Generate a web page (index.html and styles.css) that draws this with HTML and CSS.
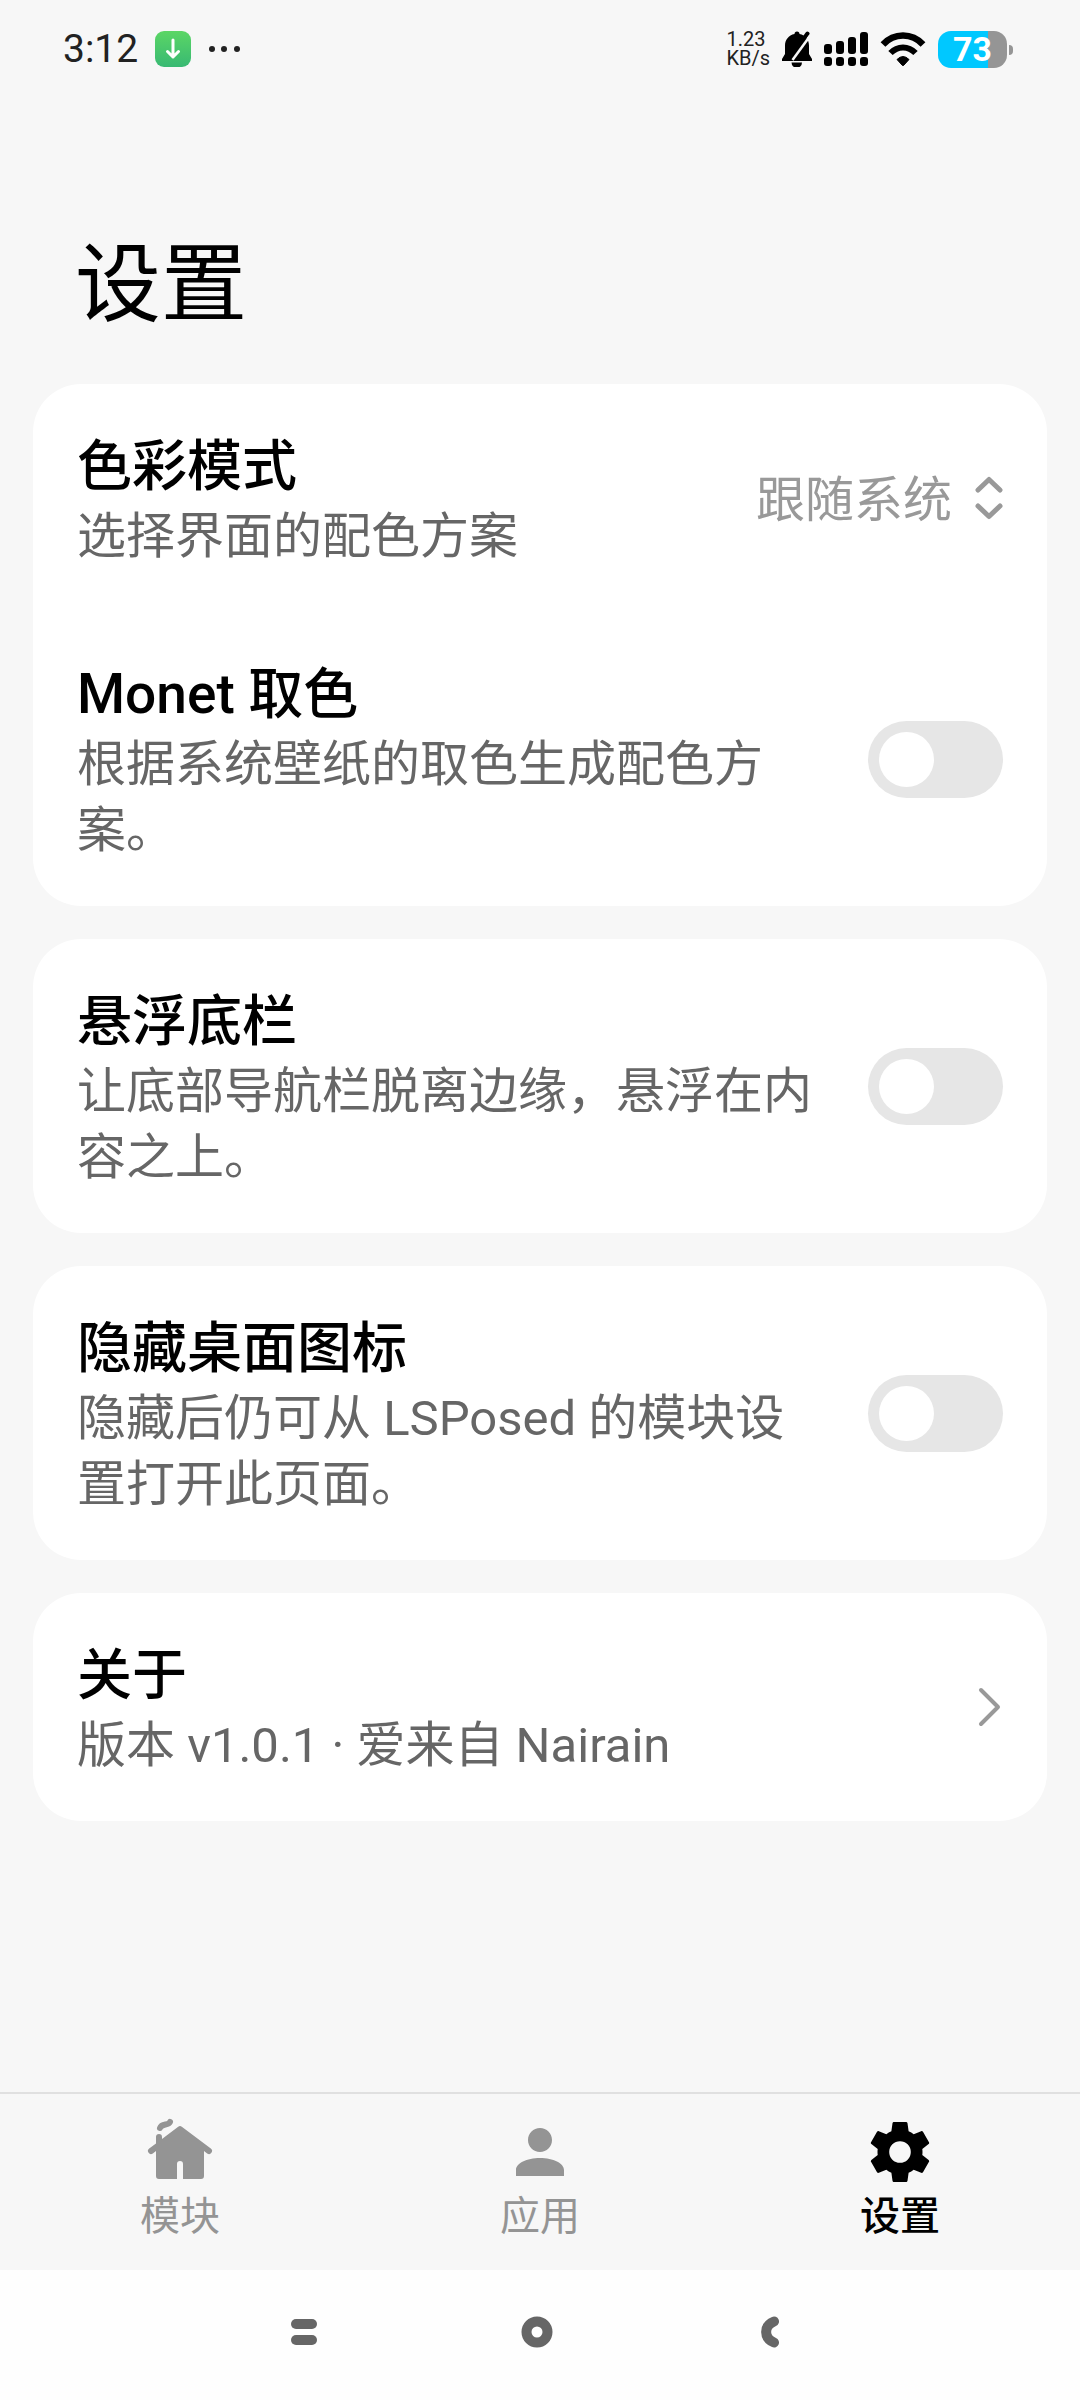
FILE: index.html
```html
<!DOCTYPE html>
<html lang="zh-CN">
<head>
    <meta charset="UTF-8">
    <meta name="viewport" content="width=device-width, initial-scale=1.0">
    <title>设置</title>
    <link rel="stylesheet" href="styles.css">
</head>
<body>

    <header class="status-bar">
        <div class="status-left">
            <span class="clock">3:12</span>
            <svg class="download" width="36" height="36" viewBox="0 0 36 36">
                <defs>
                    <linearGradient id="green" x1="0" y1="0" x2="0" y2="1">
                        <stop offset="0" stop-color="#5bd665"/>
                        <stop offset="1" stop-color="#38b973"/>
                    </linearGradient>
                </defs>
                <rect width="36" height="36" rx="9" fill="url(#green)"/>
                <path d="M18 9v17M12.500 20.500l5.500 5.500 5.500-5.500" fill="none" stroke="#fff" stroke-width="3" stroke-linecap="round" stroke-linejoin="round"/>
            </svg>
            <svg width="32" height="36" viewBox="0 0 32 36" fill="#222">
                <circle cx="4" cy="18" r="3"/>
                <circle cx="16" cy="18" r="3"/>
                <circle cx="29" cy="18" r="3"/>
            </svg>
        </div>
        <div class="status-right">
            <div class="speed">
                <span>1.23</span>
                <span>KB/s</span>
            </div>
            <svg width="30" height="36" viewBox="0 0 30 36">
                <path d="M12.500 3a2.500 2.500 0 0 1 5 0c6 1.200 9.500 6 9.500 11.500V23l3 5v2H0v-2l3-5v-8.500C3 9 6.500 4.200 12.500 3z"/>
                <path d="M9.500 31.500h10.500a5 5 0 0 1-10.500 0z"/>
                <path d="M20 10l5.500-7.500" stroke="#000" stroke-width="4" stroke-linecap="round"/>
                <path d="M10.500 29L28 5" stroke="#f7f7f7" stroke-width="2.500"/>
            </svg>
            <svg width="44" height="36" viewBox="0 0 44 36">
                <rect x="0" y="13" width="8" height="10" rx="3"/>
                <rect x="12" y="10" width="8" height="13" rx="3"/>
                <rect x="24" y="6" width="8" height="17" rx="3"/>
                <rect x="36" y="1" width="8" height="22" rx="3"/>
                <rect x="0" y="26" width="8" height="9" rx="3"/>
                <rect x="12" y="26" width="8" height="9" rx="3"/>
                <rect x="24" y="26" width="8" height="9" rx="3"/>
                <rect x="36" y="26" width="8" height="9" rx="3"/>
            </svg>
            <svg width="46" height="36" viewBox="0 0 46 36">
                <path d="M3 13.500C14 1.500 32 1.500 43 13.500" fill="none" stroke="#000" stroke-width="6.500"/>
                <path d="M10.500 22C17.500 14.500 28.500 14.500 35.500 22" fill="none" stroke="#000" stroke-width="6"/>
                <path d="M17 28.500q6-6 12 0l-5 5.500q-1 1.200-2 0z" stroke="#000" stroke-linejoin="round"/>
            </svg>
            <span class="battery">73</span>
        </div>
    </header>

    <main>
        <h1>设置</h1>

        <section class="card">
            <div class="row">
                <div class="text">
                    <label class="title" for="colorMode">色彩模式</label>
                    <p>选择界面的配色方案</p>
                </div>
                <div class="dropdown">
                    <select id="colorMode">
                        <option>跟随系统</option>
                        <option>浅色模式</option>
                        <option>深色模式</option>
                    </select>
                    <svg width="28" height="44" viewBox="0 0 28 44">
                        <path d="M3 14L14 3.500 25 14M3 30l11 10.500L25 30"/>
                    </svg>
                </div>
            </div>
            <div class="row">
                <div class="text">
                    <label class="title" for="monet">Monet 取色</label>
                    <p>根据系统壁纸的取色生成配色方案。</p>
                </div>
                <input type="checkbox" class="switch" id="monet">
            </div>
        </section>

        <section class="card">
            <div class="row">
                <div class="text">
                    <label class="title" for="floatingBar">悬浮底栏</label>
                    <p>让底部导航栏脱离边缘，悬浮在内容之上。</p>
                </div>
                <input type="checkbox" class="switch" id="floatingBar">
            </div>
        </section>

        <section class="card">
            <div class="row">
                <div class="text">
                    <label class="title" for="hideIcon">隐藏桌面图标</label>
                    <p>隐藏后仍可从 LSPosed 的模块设置打开此页面。</p>
                </div>
                <input type="checkbox" class="switch" id="hideIcon">
            </div>
        </section>

        <section class="card">
            <a class="row" href="#about">
                <div class="text">
                    <span class="title">关于</span>
                    <p>版本 v1.0.1 · 爱来自 Nairain</p>
                </div>
                <svg class="chevron" width="28" height="40" viewBox="0 0 28 40">
                    <path d="M6 3l17 17L6 37"/>
                </svg>
            </a>
        </section>
    </main>

    <nav class="tab-bar">
        <a href="#modules">
            <svg width="72" height="72" viewBox="0 0 72 72">
                <path d="M16 12C18 7 24 10 26 6" fill="none" stroke="currentColor" stroke-width="6" stroke-linecap="round"/>
                <path d="M12 21a3 3 0 0 1 6 0v2L34.200 10.700a3 3 0 0 1 3.600 0L66.800 32.600a3 3 0 0 1-3.600 4.800L60 35v25a3 3 0 0 1-3 3H39V48a3 3 0 0 0-6 0v15H15a3 3 0 0 1-3-3V35l-3.200 2.400a3 3 0 0 1-3.600-4.800L12 27.500z"/>
            </svg>
            模块
        </a>
        <a href="#apps">
            <svg width="72" height="72" viewBox="0 0 24 24">
                <path d="M12 12c2.210 0 4-1.790 4-4s-1.790-4-4-4-4 1.790-4 4 1.790 4 4 4zm0 2c-4.420 0-8 1.790-8 4v2h16v-2c0-2.210-3.580-4-8-4z"/>
            </svg>
            应用
        </a>
        <a class="active" href="#settings">
            <svg width="72" height="72" viewBox="0 0 24 24">
                <path d="M19.500 12c0-.34-.03-.66-.07-1l2.110-1.630c.19-.15.24-.42.12-.64l-2-3.460c-.12-.22-.39-.31-.61-.22l-2.490 1c-.52-.39-1.060-.73-1.690-.98l-.37-2.650A.506.506 0 0 0 14 2h-4c-.25 0-.46.18-.5.42l-.37 2.650c-.63.25-1.170.59-1.690.98l-2.490-1c-.22-.09-.49 0-.61.22l-2 3.460c-.13.220-.07.490.12.640L4.570 11c-.04.340-.07.670-.07 1 0 .330.03.650.07.970l-2.110 1.660c-.19.150-.25.420-.12.640l2 3.460c.12.220.390.300.610.220l2.490-1.010c.52.400 1.060.740 1.690.990l.37 2.650c.040.240.250.420.500.420h4c.250 0 .460-.180.500-.420l.370-2.650c.630-.260 1.170-.590 1.690-.990l2.490 1.010c.220.080.490 0 .610-.220l2-3.460c.120-.220.070-.490-.120-.640l-2.110-1.660c.040-.320.070-.640.070-.970zM12 15.600a3.600 3.600 0 1 1 0-7.200 3.600 3.600 0 0 1 0 7.200z"/>
            </svg>
            设置
        </a>
    </nav>

    <footer class="system-nav">
        <button type="button" aria-label="最近任务">
            <svg width="32" height="32" viewBox="0 0 32 32">
                <rect x="3" y="3" width="26" height="10" rx="5"/>
                <rect x="3" y="19" width="26" height="10" rx="5"/>
            </svg>
        </button>
        <button type="button" aria-label="主屏幕">
            <svg width="32" height="32" viewBox="0 0 32 32">
                <circle cx="16" cy="16" r="10.500" fill="none" stroke="#666" stroke-width="10"/>
            </svg>
        </button>
        <button type="button" aria-label="返回">
            <svg width="32" height="32" viewBox="0 0 32 32">
                <path d="M20 5.500C9.500 10 9.500 22 20 26.500" fill="none" stroke="#666" stroke-width="10" stroke-linecap="round"/>
            </svg>
        </button>
    </footer>

</body>
</html>
```
FILE: styles.css
```css
* {
    box-sizing: border-box;
}

body {
    font-family: Roboto, "Noto Sans CJK SC", sans-serif;
    background-color: #f7f7f7;
    color: #000000;
    margin: 0;
    min-height: 100vh;
    display: flex;
    flex-direction: column;
}

a {
    color: inherit;
    text-decoration: none;
}

svg {
    display: block;
    flex-shrink: 0;
}

/* Status bar */
.status-bar {
    display: flex;
    justify-content: space-between;
    align-items: center;
    height: 98px;
    padding: 0 67px 0 63px;
}

.status-left, .status-right {
    display: flex;
    align-items: center;
}

.clock {
    font-size: 39px;
    color: #222222;
}

.download {
    margin: 0 17px;
}

.status-right {
    gap: 12px;
}

.speed {
    display: flex;
    flex-direction: column;
    font-size: 20px;
    line-height: 19px;
    color: #222222;
}

.battery {
    position: relative;
    width: 69px;
    height: 37px;
    margin-right: 6px;
    border-radius: 13px;
    background: linear-gradient(to right, #00c8ff 73%, #959595 73%);
    color: #ffffff;
    font-size: 34px;
    font-weight: bold;
    line-height: 37px;
    text-align: center;
}

.battery::after {
    content: "";
    position: absolute;
    right: -6px;
    top: 14px;
    width: 4px;
    height: 10px;
    border-radius: 0 4px 4px 0;
    background-color: #959595;
}

/* Settings */
main {
    flex: 1;
    padding: 125px 33px 33px;
}

h1 {
    margin: 0 0 35px;
    padding: 0 42px;
    font-size: 86px;
    font-weight: normal;
    line-height: 126px;
}

.card {
    margin-bottom: 33px;
    background-color: #ffffff;
    border-radius: 48px;
}

.row {
    display: flex;
    align-items: center;
    justify-content: space-between;
    gap: 48px;
    padding: 42px 44px;
}

.text {
    padding-top: 2px;
}

.title {
    display: block;
    font-size: 55px;
    font-weight: 500;
    line-height: 76px;
}

.text p {
    margin: 0;
    font-size: 49px;
    line-height: 66px;
    color: #666666;
}

.dropdown {
    display: flex;
    align-items: center;
    gap: 22px;
}

.dropdown select {
    appearance: none;
    border: none;
    padding: 5px 0 0;
    background: none;
    font-family: inherit;
    font-size: 49px;
    line-height: 66px;
    color: #999999;
}

.dropdown path, .chevron path {
    fill: none;
    stroke: #999999;
    stroke-width: 5;
    stroke-linecap: round;
    stroke-linejoin: round;
}

.chevron path {
    stroke-width: 4;
}

.switch {
    appearance: none;
    flex-shrink: 0;
    width: 135px;
    height: 77px;
    margin: 0;
    padding: 11px;
    border-radius: 39px;
    background-color: #e6e6e6;
}

.switch::before {
    content: "";
    display: block;
    width: 55px;
    height: 55px;
    border-radius: 50%;
    background-color: #ffffff;
}

.switch:checked {
    background-color: #3482ff;
}

.switch:checked::before {
    margin-left: auto;
}

/* Bottom tabs */
.tab-bar {
    display: flex;
    height: 178px;
    padding-top: 22px;
    border-top: 2px solid #e0e0e0;
}

.tab-bar a {
    flex: 1;
    display: flex;
    flex-direction: column;
    align-items: center;
    font-size: 40px;
    line-height: 58px;
    color: #949494;
}

.tab-bar a.active {
    color: #000000;
    font-weight: 500;
}

.tab-bar svg {
    fill: currentColor;
}

/* System navigation */
.system-nav {
    display: flex;
    justify-content: center;
    align-items: center;
    gap: 153px;
    height: 130px;
    padding: 0 7px 6px 0;
    background-color: #fefefe;
}

.system-nav button {
    display: flex;
    justify-content: center;
    width: 80px;
    padding: 0;
    border: none;
    background: none;
}

.system-nav svg {
    fill: #666666;
}
```
